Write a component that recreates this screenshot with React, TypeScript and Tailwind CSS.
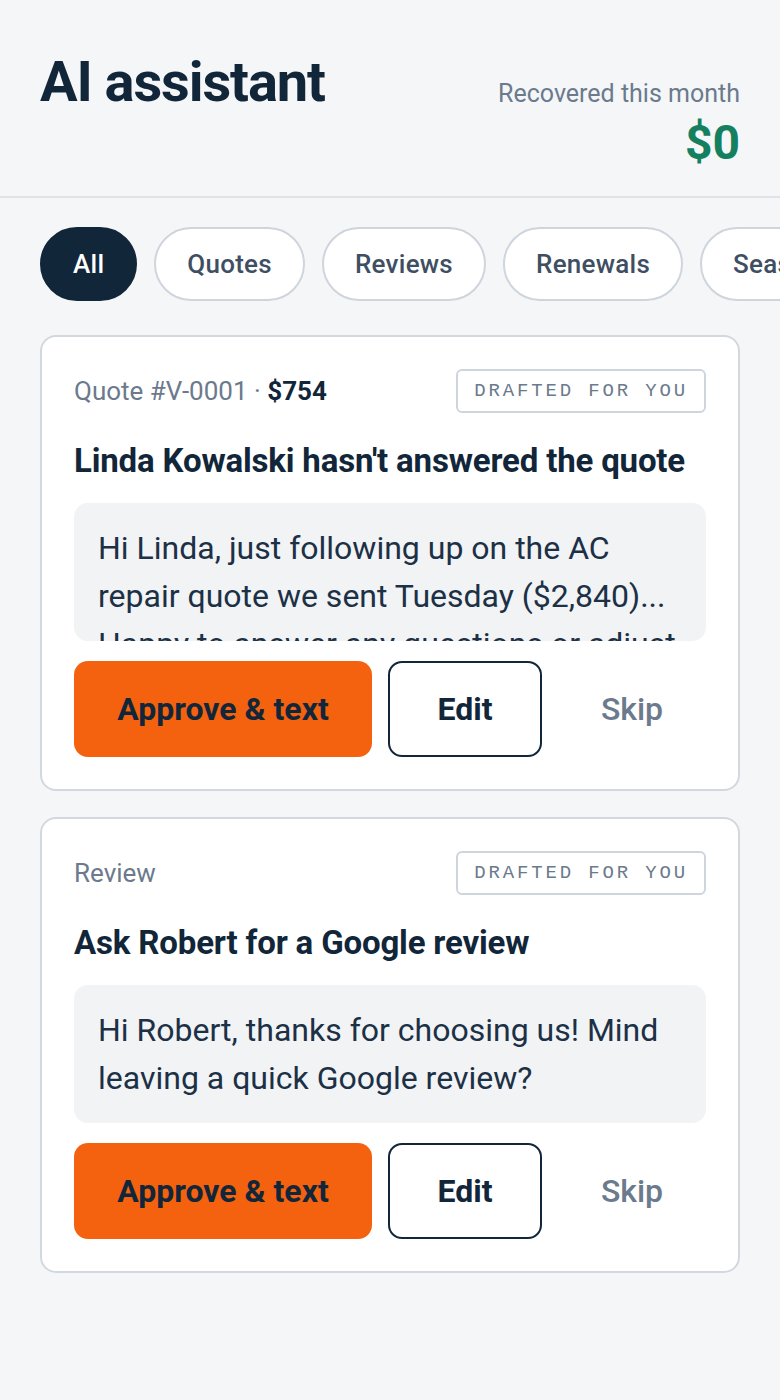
import { useState } from 'react';

type Filter = 'All' | 'Quotes' | 'Reviews' | 'Renewals' | 'Seasonal';

const filters: Filter[] = ['All', 'Quotes', 'Reviews', 'Renewals', 'Seasonal'];

type Draft = {
  id: string;
  label: string;
  amount?: string;
  title: string;
  message: string;
};

const drafts: Draft[] = [
  {
    id: 'q1',
    label: 'Quote #V-0001',
    amount: '$754',
    title: "Linda Kowalski hasn't answered the quote",
    message:
      'Hi Linda, just following up on the AC repair quote we sent Tuesday ($2,840)... Happy to answer any questions or adjust the scope if needed.',
  },
  {
    id: 'r1',
    label: 'Review',
    title: 'Ask Robert for a Google review',
    message: 'Hi Robert, thanks for choosing us! Mind leaving a quick Google review?',
  },
];

export default function App() {
  const [active, setActive] = useState<Filter>('All');

  return (
    <div className="min-h-screen bg-[#f5f6f8] font-['Roboto',sans-serif] text-[#12263a]">
      {/* header */}
      <header className="border-b-2 border-[#dfe3e8] px-10 pt-[46px] pb-[27px] flex justify-between items-start">
        <h1 className="text-[56px] font-bold leading-[72px] tracking-[-0.02em]">AI assistant</h1>
        <div className="text-right pt-[32px]">
          <div className="text-[25px] leading-[32px] text-[#6b7a8c]">Recovered this month</div>
          <div className="text-[48px] font-bold leading-[52px] text-[#15805f] mt-[7px]">$0</div>
        </div>
      </header>

      {/* filter chips */}
      <div className="flex gap-[17px] pl-10 pt-[29px] overflow-hidden whitespace-nowrap">
        {filters.map((f) => (
          <button
            key={f}
            onClick={() => setActive(f)}
            className={`h-[74px] shrink-0 rounded-full px-[31px] text-[26px] font-medium tracking-[0.01em] border-2 ${
              active === f
                ? 'bg-[#12263a] border-[#12263a] text-white'
                : 'bg-white border-[#cfd5dd] text-[#3f4f63]'
            }`}
          >
            {f}
          </button>
        ))}
      </div>

      {/* drafts */}
      <main className="px-10 pt-[34px] flex flex-col gap-[26px]">
        {drafts.map((d) => (
          <DraftCard key={d.id} draft={d} />
        ))}
      </main>
    </div>
  );
}

function DraftCard({ draft }: { draft: Draft }) {
  return (
    <div className="bg-white border-2 border-[#d3d8df] rounded-[16px] px-[32px] pt-[32px] pb-[32px]">
      <div className="flex justify-between items-center">
        <div className="text-[26px] text-[#6b7a8c]">
          {draft.label}
          {draft.amount && (
            <>
              <span> · </span>
              <span className="font-bold text-[#12263a]">{draft.amount}</span>
            </>
          )}
        </div>
        <div className="h-[44px] px-[16px] flex items-center border-2 border-[#cfd5dd] rounded-[6px] font-['Liberation_Mono',monospace] text-[19px] tracking-[0.15em] text-[#6b7a8c]">
          DRAFTED FOR YOU
        </div>
      </div>

      <h2 className="mt-[28px] text-[33px] font-bold leading-[40px] tracking-[-0.005em]">{draft.title}</h2>

      <div className="mt-[22px] bg-[#f1f3f5] rounded-[14px] px-[24px] py-[21px] max-h-[138px] overflow-hidden">
        <p className="text-[32px] leading-[48px] text-[#1c3046]">{draft.message}</p>
      </div>

      <div className="mt-[20px] flex gap-[16px] items-center">
        <button className="w-[298px] h-[96px] rounded-[14px] bg-[#f4620f] text-[32px] font-bold text-[#12263a]">
          Approve &amp; text
        </button>
        <button className="w-[154px] h-[96px] rounded-[14px] border-2 border-[#12263a] bg-white text-[32px] font-bold text-[#12263a]">
          Edit
        </button>
        <button className="flex-1 h-[96px] text-[32px] font-medium text-[#6b7a8c]">Skip</button>
      </div>
    </div>
  );
}
